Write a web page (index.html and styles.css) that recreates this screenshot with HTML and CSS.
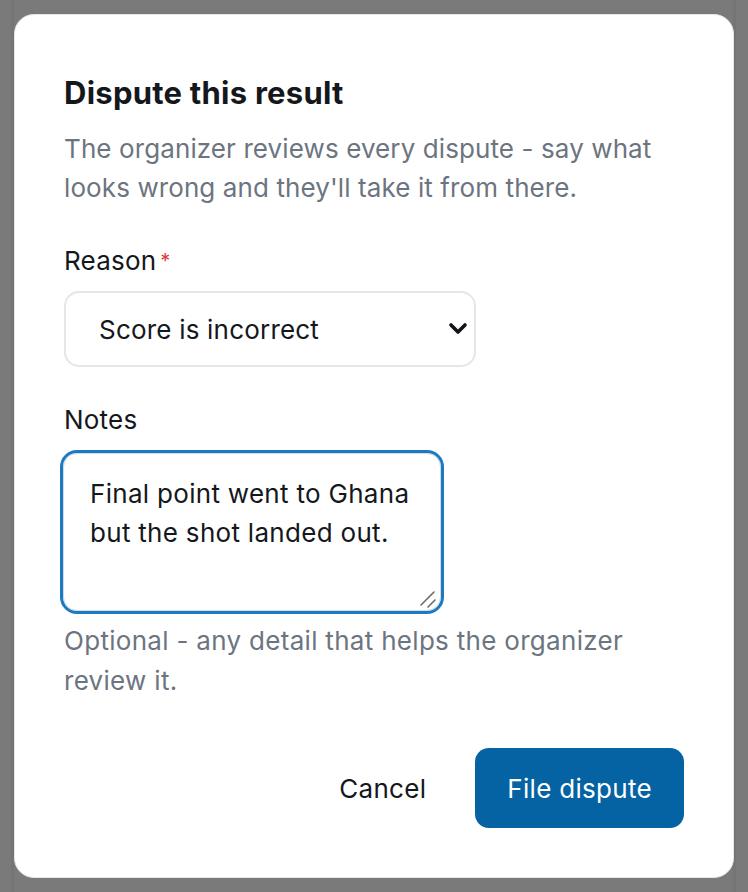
FILE: index.html
```html
<!DOCTYPE html>
<html lang="en">
<head>
<meta charset="utf-8">
<title>Dispute this result</title>
<link rel="stylesheet" href="styles.css">
</head>
<body>
<div class="backdrop">
  <div class="page-edge page-edge-left"></div>
  <div class="page-edge page-edge-right"></div>
  <div class="modal" role="dialog" aria-labelledby="dlg-title">
    <h2 id="dlg-title" class="modal-title">Dispute this result</h2>
    <p class="modal-desc">The organizer reviews every dispute - say what looks wrong and they'll take it from there.</p>

    <div class="field field-reason">
      <label class="field-label" for="reason">Reason<span class="req">*</span></label>
      <div class="select-wrap">
        <select id="reason" class="select">
          <option selected>Score is incorrect</option>
          <option>Wrong winner</option>
          <option>Other</option>
        </select>
        <svg class="chevron" viewBox="0 0 20 14" width="20" height="14" aria-hidden="true">
          <path d="M3 3 L10 10 L17 3" fill="none" stroke="#111418" stroke-width="3.6" stroke-linecap="round" stroke-linejoin="round"/>
        </svg>
      </div>
    </div>

    <div class="field field-notes">
      <label class="field-label" for="notes">Notes</label>
      <div class="textarea-wrap">
        <textarea id="notes" class="textarea">Final point went to Ghana but the shot landed out.</textarea>
        <svg class="grip" viewBox="0 0 16 18" width="16" height="18" aria-hidden="true">
          <path d="M1 15 L14 2 M8 17 L15 10" fill="none" stroke="#6b6b6b" stroke-width="1.6" stroke-linecap="round"/>
        </svg>
      </div>
      <p class="helper">Optional - any detail that helps the organizer review it.</p>
    </div>

    <div class="actions">
      <button class="btn btn-ghost" type="button">Cancel</button>
      <button class="btn btn-primary" type="button">File dispute</button>
    </div>
  </div>
</div>
</body>
</html>
```
FILE: styles.css
```css
* { box-sizing: border-box; }

html, body {
  margin: 0;
  padding: 0;
  height: 892px;
  background: #7a7a7a;
  font-family: "Inter", "Noto Sans", "Liberation Sans", sans-serif;
  color: #14181d;
}

.backdrop {
  position: relative;
  padding: 14px;
  height: 892px;
}

.page-edge {
  position: absolute;
  top: 0;
  bottom: 0;
  width: 3px;
  background: #757575;
}
.page-edge-left { left: 11px; }
.page-edge-right { left: 733px; }

.modal {
  position: relative;
  background: #ffffff;
  border: 1px solid #e3e6ea;
  border-radius: 20px;
  height: 864px;
  padding: 58px 49px 49px;
  display: flex;
  flex-direction: column;
}

.modal-title {
  margin: 0;
  font-size: 31px;
  line-height: 40px;
  font-weight: 700;
  letter-spacing: 0.25px;
  color: #14181d;
}

.modal-desc {
  margin: 16px 0 0;
  font-size: 26px;
  line-height: 39px;
  letter-spacing: 0.1px;
  color: #6c757f;
  max-width: 600px;
}

.field { display: flex; flex-direction: column; align-items: flex-start; }
.field-reason { margin-top: 36px; }
.field-notes { margin-top: 35px; }

.field-label {
  font-size: 26px;
  line-height: 36px;
  letter-spacing: 0.2px;
  color: #14181d;
}
.req {
  color: #e0383e;
  margin-left: 4px;
  font-size: 20px;
  vertical-align: top;
}

.select-wrap {
  position: relative;
  margin-top: 12px;
}
.select {
  -webkit-appearance: none;
  appearance: none;
  width: 412px;
  height: 76px;
  padding: 0 60px 0 33px;
  font: inherit;
  font-size: 26px;
  letter-spacing: 0.2px;
  color: #14181d;
  background: #fff;
  border: 2px solid #e3e6ea;
  border-radius: 15px;
}
.chevron {
  position: absolute;
  right: 8px;
  top: 31px;
  pointer-events: none;
}

.textarea-wrap {
  position: relative;
  margin-top: 15px;
  margin-left: -1px;
}
.textarea {
  display: block;
  width: 378px;
  height: 158px;
  padding: 20px 20px 20px 26px;
  font: inherit;
  font-size: 26px;
  line-height: 39px;
  letter-spacing: 0.3px;
  color: #14181d;
  background: #fff;
  border: 1px solid #d6dadf;
  border-radius: 14px;
  outline: 3px solid #1b7bc2;
  outline-offset: 0;
  resize: none;
}
.grip {
  position: absolute;
  right: 5px;
  bottom: 3px;
  pointer-events: none;
}

.helper {
  margin: 10px 0 0;
  font-size: 26px;
  line-height: 40px;
  letter-spacing: 0.3px;
  color: #6c757f;
  max-width: 600px;
}

.actions {
  margin-top: auto;
  display: flex;
  justify-content: flex-end;
  align-items: center;
  gap: 17px;
}

.btn {
  font: inherit;
  font-size: 26px;
  letter-spacing: 0.3px;
  border: 0;
  border-radius: 14px;
  height: 80px;
  padding: 0 32px;
  cursor: pointer;
}
.btn-ghost {
  background: transparent;
  color: #14181d;
}
.btn-primary {
  background: #0563a3;
  color: #ffffff;
}
```
